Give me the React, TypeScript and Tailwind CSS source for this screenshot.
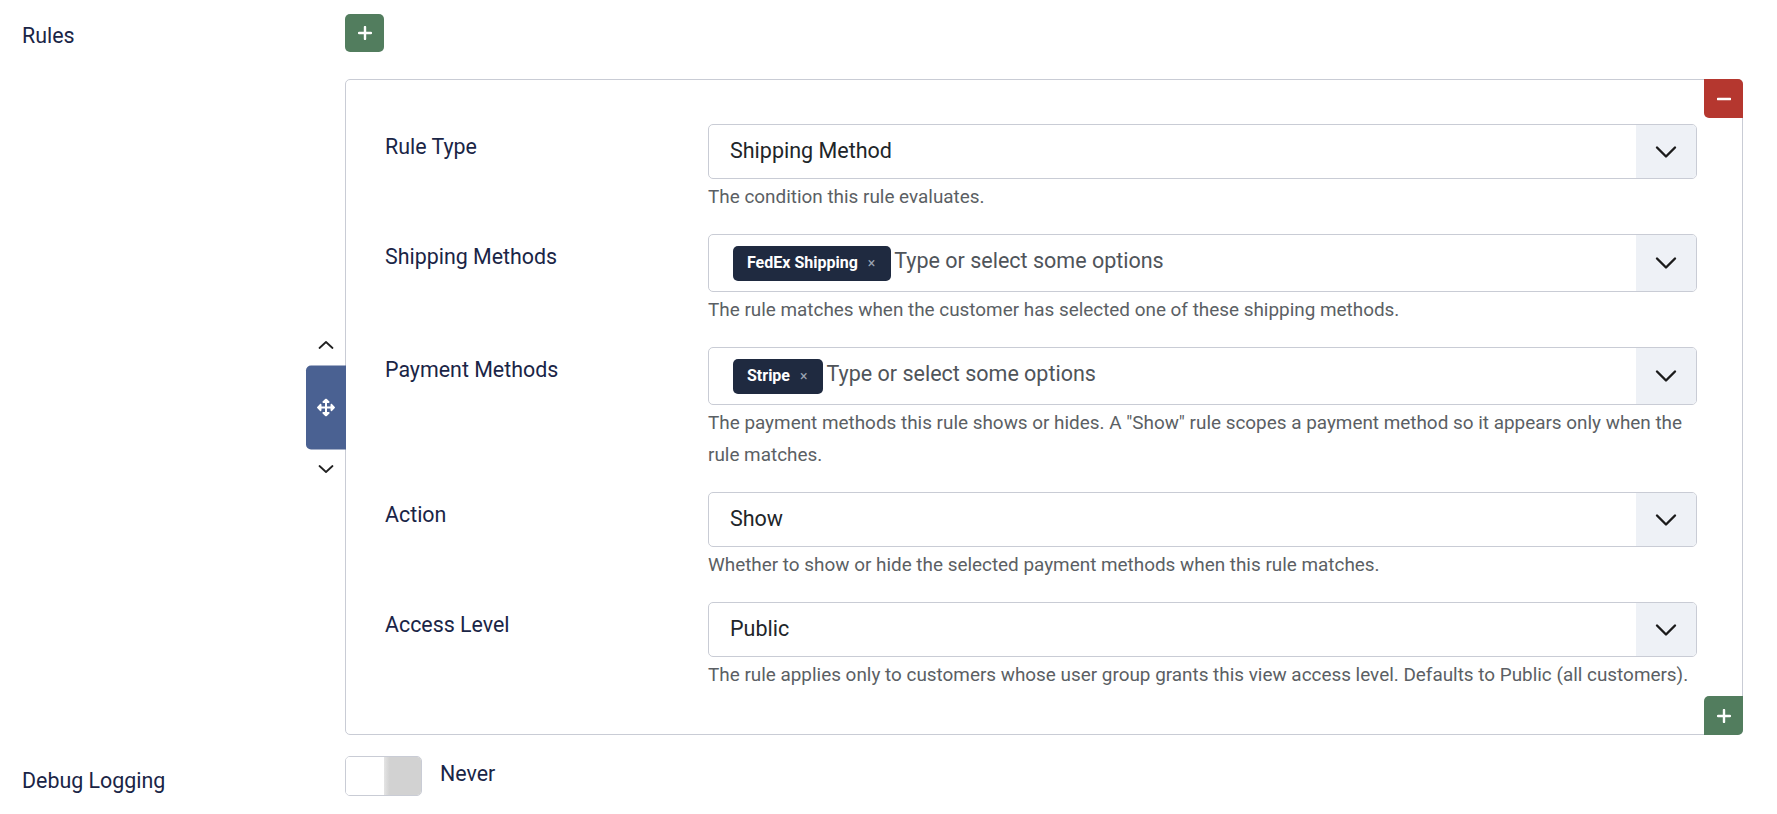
import React from "react";
import { FaArrowsAlt } from "react-icons/fa";

const Chevron = () => (
  <svg width="22" height="14" viewBox="0 0 22 14" fill="none">
    <path d="M2 2.5l9 9 9-9" stroke="#1b1b1b" strokeWidth="2.4" strokeLinecap="round" strokeLinejoin="round" />
  </svg>
);

const SmallChevron = ({ up }: { up?: boolean }) => (
  <svg width="16" height="9" viewBox="0 0 16 9" fill="none">
    <path
      d={up ? "M1.5 7.5l6.5-6 6.5 6" : "M1.5 1.5l6.5 6 6.5-6"}
      stroke="#222"
      strokeWidth="1.8"
      strokeLinecap="round"
      strokeLinejoin="round"
    />
  </svg>
);

const PlusIcon = () => (
  <svg width="14" height="14" viewBox="0 0 14 14" fill="none">
    <path d="M7 1v12M1 7h12" stroke="white" strokeWidth="2.4" strokeLinecap="round" />
  </svg>
);

const MinusIcon = () => (
  <svg width="14" height="4" viewBox="0 0 14 4" fill="none">
    <path d="M1 2h12" stroke="white" strokeWidth="2.6" strokeLinecap="round" />
  </svg>
);

function SingleSelect({ value }: { value: string }) {
  return (
    <div className="flex h-[55px] overflow-hidden rounded-[5px] border border-[#c9ccd5] bg-white">
      <div className="flex min-w-0 flex-1 items-center pl-[21px] text-[21.5px] text-[#212529]">{value}</div>
      <div className="flex w-[60px] items-center justify-center bg-[#eef1f6]">
        <Chevron />
      </div>
    </div>
  );
}

function MultiSelect({ chip }: { chip: string }) {
  return (
    <div className="flex h-[58px] overflow-hidden rounded-[5px] border border-[#c9ccd5] bg-white">
      <div className="flex min-w-0 flex-1 items-center pl-[24px]">
        <span className="inline-flex h-[35px] items-center rounded-[5px] bg-[#1f2a40] pl-[14px] pr-[16px] text-[16px] font-bold text-white">
          {chip}
          <span className="ml-[10px] text-[14px] font-normal text-[#9aa3b2]">×</span>
        </span>
        <span className="ml-[3px] pb-[4px] text-[21.5px] text-[#4f545a]">Type or select some options</span>
      </div>
      <div className="flex w-[60px] items-center justify-center bg-[#eef1f6]">
        <Chevron />
      </div>
    </div>
  );
}

function Row({
  label,
  help,
  last,
  children,
}: {
  label: string;
  help: string;
  last?: boolean;
  children: React.ReactNode;
}) {
  return (
    <div className={last ? "grid grid-cols-[323px_1fr]" : "mb-[21px] grid grid-cols-[323px_1fr]"}>
      <div className="pt-[8px] text-[21.4px] leading-[30px] text-[#1a2546]">{label}</div>
      <div>
        {children}
        <p className="mt-[2px] text-[18.9px] leading-[32px] text-[#5b5f64]">{help}</p>
      </div>
    </div>
  );
}

export default function App() {
  return (
    <div className="min-h-screen bg-white font-['Roboto',sans-serif]">
      <div className="pl-[22px] pr-[34px] pt-[14px]">
        <div className="flex">
          <div className="w-[323px] shrink-0 pt-[7px] text-[21.4px] leading-[30px] text-[#1a2546]">Rules</div>
          <div className="flex-1">
            <button className="flex h-[38px] w-[39px] items-center justify-center rounded-[5px] bg-[#527d5e]">
              <PlusIcon />
            </button>

            <div className="relative mt-[27px] rounded-[5px] border border-[#c9ccd5] pb-[43px] pl-[39px] pr-[45px] pt-[44px]">
              {/* reorder handle hanging off the card's left edge */}
              <div className="absolute right-full top-1/2 flex w-[40px] -translate-y-1/2 flex-col items-center">
                <SmallChevron up />
                <div className="mt-[16px] flex h-[84px] w-[40px] items-center justify-center rounded-l-[5px] bg-[#4a6192] text-white">
                  <FaArrowsAlt size={18} />
                </div>
                <div className="mt-[15px]">
                  <SmallChevron />
                </div>
              </div>

              <button className="absolute right-[-1px] top-[-1px] flex h-[39px] w-[39px] items-center justify-center rounded-bl-[5px] rounded-tr-[5px] bg-[#b5372f]">
                <MinusIcon />
              </button>

              <Row label="Rule Type" help="The condition this rule evaluates.">
                <SingleSelect value="Shipping Method" />
              </Row>
              <Row
                label="Shipping Methods"
                help="The rule matches when the customer has selected one of these shipping methods."
              >
                <MultiSelect chip="FedEx Shipping" />
              </Row>
              <Row
                label="Payment Methods"
                help={'The payment methods this rule shows or hides. A "Show" rule scopes a payment method so it appears only when the rule matches.'}
              >
                <MultiSelect chip="Stripe" />
              </Row>
              <Row
                label="Action"
                help="Whether to show or hide the selected payment methods when this rule matches."
              >
                <SingleSelect value="Show" />
              </Row>
              <Row
                last
                label="Access Level"
                help="The rule applies only to customers whose user group grants this view access level. Defaults to Public (all customers)."
              >
                <SingleSelect value="Public" />
              </Row>

              <button className="absolute bottom-[-1px] right-[-1px] flex h-[39px] w-[39px] items-center justify-center rounded-br-[5px] rounded-tl-[5px] bg-[#527d5e]">
                <PlusIcon />
              </button>
            </div>
          </div>
        </div>

        <div className="mt-[21px] flex">
          <div className="w-[323px] shrink-0 pt-[10px] text-[21.4px] leading-[30px] text-[#1a2546]">Debug Logging</div>
          <div className="flex items-center">
            <div className="flex h-[40px] w-[77px] overflow-hidden rounded-[5px] border border-[#c9ccd5]">
              <div className="w-1/2 bg-white" />
              <div className="w-1/2 bg-gradient-to-r from-[#e4e4e4] to-[#d2d2d2] to-[15%]" />
            </div>
            <span className="ml-[18px] pb-[4px] text-[21.4px] text-[#1a2546]">Never</span>
          </div>
        </div>
      </div>
    </div>
  );
}
